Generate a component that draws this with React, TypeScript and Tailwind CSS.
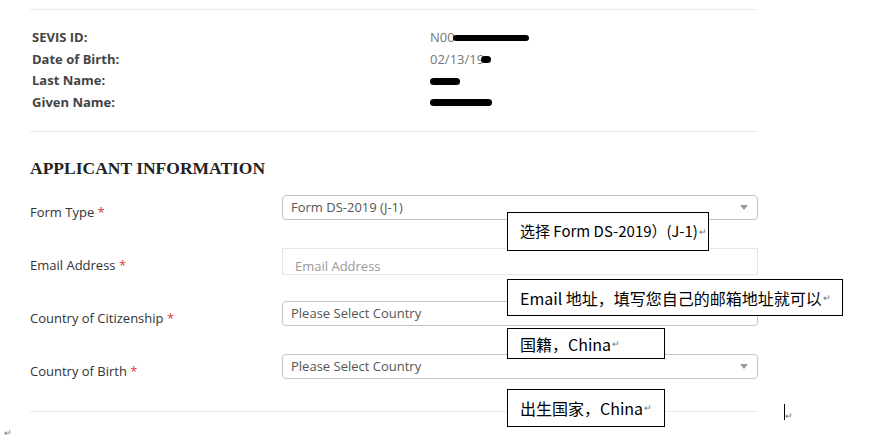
import type { ReactNode } from "react";

const infoRows = [
  { label: "SEVIS ID:", value: "N00", blot: "w-[76px] h-[6px] -ml-[2px]" },
  { label: "Date of Birth:", value: "02/13/19", blot: "w-[10px] h-[7px] -ml-[3px]" },
  { label: "Last Name:", value: "", blot: "w-[30px] h-[7px]" },
  { label: "Given Name:", value: "", blot: "w-[62px] h-[7px]" },
];

function Mark() {
  return <span className="ml-[1px] text-[9px] text-gray-500">↵</span>;
}

function Arrow() {
  return (
    <svg width="8" height="5" viewBox="0 0 8 5" className="shrink-0">
      <path d="M0 0 L8 0 L4 5 Z" fill="#9a9a9a" />
    </svg>
  );
}

function SelectBox({ text }: { text: string }) {
  return (
    <div className="flex h-[25px] w-[476px] items-center justify-between rounded-[4px] border border-[#c4c4c4] pl-[8px] pr-[9px] text-[13px] text-[#555]">
      <span>{text}</span>
      <Arrow />
    </div>
  );
}

function Row({ label, children, h }: { label: string; children: ReactNode; h: string }) {
  return (
    <div className={`flex items-start ${h}`}>
      <div className="w-[252px] pt-[8px] text-[13px] text-[#333]">
        {label} <span className="text-[#d9383a]">*</span>
      </div>
      {children}
    </div>
  );
}

function Callout({ className, children }: { className: string; children: ReactNode }) {
  return (
    <div
      className={`absolute flex items-center whitespace-nowrap border border-black bg-white pl-[12px] text-black ${className}`}
      style={{ fontFamily: '"Noto Sans CJK SC", sans-serif' }}
    >
      {children}
    </div>
  );
}

export default function App() {
  return (
    <div className="relative h-[438px] w-[891px] overflow-hidden bg-white" style={{ fontFamily: '"Open Sans", sans-serif' }}>
      <div className="w-[758px] pl-[30px]">
        <div className="mt-[9px] border-t border-[#ececec]" />

        {/* student info */}
        <div className="pl-[2px] pt-[17px] pb-[17px]">
          {infoRows.map((r) => (
            <div key={r.label} className="flex h-[21.7px] items-center text-[13px]">
              <div className="w-[398px] font-bold text-[#444]">{r.label}</div>
              <div className="flex items-center text-[#777]">
                {r.value}
                <span className={`inline-block rounded-full bg-black ${r.blot}`} />
              </div>
            </div>
          ))}
        </div>

        <div className="border-t border-[#ececec]" />

        <h2
          className="mt-[23px] text-[17.5px] font-bold text-[#222]"
          style={{ fontFamily: '"Liberation Serif", serif' }}
        >
          APPLICANT INFORMATION
        </h2>

        <div className="mt-[14px]">
          <Row label="Form Type" h="h-[53px]">
            <SelectBox text="Form DS-2019 (J-1)" />
          </Row>
          <Row label="Email Address" h="h-[53px]">
            <div className="flex h-[27px] w-[476px] items-start border border-[#e6e6e6] pl-[12px] pt-[8px] text-[13px] text-[#999]">
              Email Address
            </div>
          </Row>
          <Row label="Country of Citizenship" h="h-[53px]">
            <SelectBox text="Please Select Country" />
          </Row>
          <Row label="Country of Birth" h="h-[57px]">
            <SelectBox text="Please Select Country" />
          </Row>
        </div>

        <div className="border-t border-[#ececec]" />
      </div>

      {/* annotation boxes */}
      <Callout className="left-[507px] top-[212px] h-[39px] w-[202px] text-[15px]">
        选择 Form DS-2019）(J-1)
        <Mark />
      </Callout>
      <Callout className="left-[507px] top-[279px] h-[37px] w-[336px] text-[16px]">
        Email 地址，填写您自己的邮箱地址就可以
        <Mark />
      </Callout>
      <Callout className="left-[507px] top-[328px] h-[31px] w-[158px] text-[16px]">
        国籍，China
        <Mark />
      </Callout>
      <Callout className="left-[507px] top-[389px] h-[38px] w-[158px] text-[16px]">
        出生国家，China
        <Mark />
      </Callout>

      <div className="absolute left-[784px] top-[404px] flex items-end">
        <span className="h-[16px] w-[1px] bg-black" />
        <span className="text-[9px] leading-none text-gray-500">↵</span>
      </div>
      <span className="absolute left-[4px] top-[426px] text-[9px] text-gray-500">↵</span>
    </div>
  );
}
